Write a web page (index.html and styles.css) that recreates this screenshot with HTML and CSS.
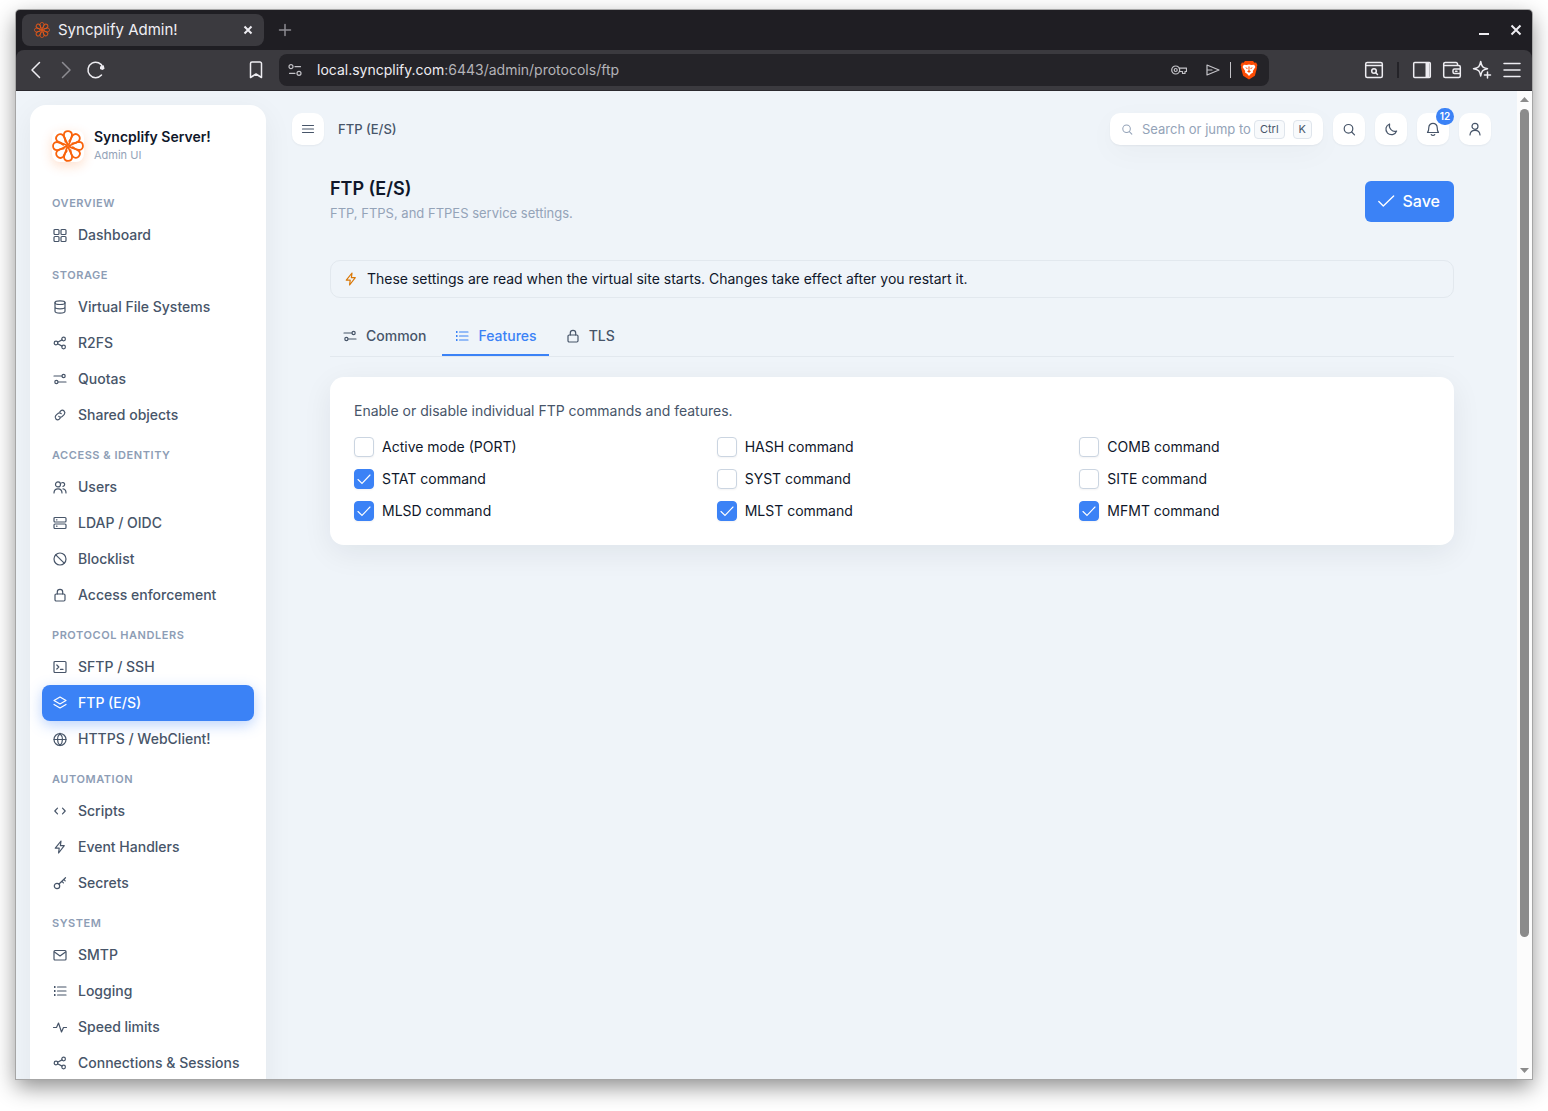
FILE: index.html
```html
<!DOCTYPE html>
<html lang="en">
<head>
    <meta charset="UTF-8">
    <meta name="viewport" content="width=device-width, initial-scale=1.0">
    <title>Syncplify Admin!</title>
    <link rel="stylesheet" href="styles.css">
</head>
<body>
    <!-- icon sprite -->
    <svg class="sprite" aria-hidden="true">
        <symbol id="i-logo" viewBox="0 0 32 32">
            <g id="petal"><path d="M15.6 14.8C15 11.500 12 8.600 11.900 5.200C11.900 -0.300 20 -0.300 20 5C20 7.600 18.700 9.600 17.200 11.200" /></g>
            <use href="#petal" transform="rotate(45 16 16)" />
            <use href="#petal" transform="rotate(90 16 16)" />
            <use href="#petal" transform="rotate(135 16 16)" />
            <use href="#petal" transform="rotate(180 16 16)" />
            <use href="#petal" transform="rotate(225 16 16)" />
            <use href="#petal" transform="rotate(270 16 16)" />
            <use href="#petal" transform="rotate(315 16 16)" />
        </symbol>
        <symbol id="i-grid" viewBox="0 0 16 16"><rect x="2" y="2.5" width="5" height="5" rx="1" /><rect x="9" y="2.5" width="5" height="5" rx="1" /><rect x="2" y="9.5" width="5" height="5" rx="1" /><rect x="9" y="9.5" width="5" height="5" rx="1" /></symbol>
        <symbol id="i-db" viewBox="0 0 16 16"><ellipse cx="8" cy="3.7" rx="5" ry="1.8" /><path d="M3 3.7v8.6c0 1 2.2 1.8 5 1.8s5-.8 5-1.800V3.7M3 8c0 1 2.2 1.8 5 1.8s5-.8 5-1.8" /></symbol>
        <symbol id="i-share" viewBox="0 0 16 16"><circle cx="4" cy="8" r="1.8" /><circle cx="11.6" cy="4" r="1.8" /><circle cx="11.6" cy="12" r="1.8" /><path d="M5.6 7.2L10 4.9M5.6 8.8l4.400 2.300" /></symbol>
        <symbol id="i-sliders" viewBox="0 0 16 16"><path d="M2 5h8M6 11h8" /><circle cx="11.6" cy="5" r="1.6" /><circle cx="4.4" cy="11" r="1.6" /></symbol>
        <symbol id="i-link" viewBox="0 0 16 16"><path d="M6.8 9.3a2.4 2.4 0 0 0 3.5 0l2-2a2.500 2.500 0 0 0-3.500-3.500l-1 1M9.200 6.700a2.400 2.400 0 0 0-3.500 0l-2 2a2.500 2.500 0 0 0 3.500 3.500l1-1" /></symbol>
        <symbol id="i-users" viewBox="0 0 16 16"><circle cx="6" cy="5.4" r="2.5" /><path d="M2 14c0-2.600 1.700-4.200 4-4.200s4 1.600 4 4.200M9.600 3.900a1.900 1.900 0 1 1 1.400 3.400M11 9.800c1.900.2 3 1.800 3 4.200" /></symbol>
        <symbol id="i-server" viewBox="0 0 16 16"><rect x="2" y="2.5" width="12" height="4.5" rx="1" /><rect x="2" y="9" width="12" height="4.5" rx="1" /><path d="M4.500 4.800h.5M4.500 11.200h.5" /></symbol>
        <symbol id="i-ban" viewBox="0 0 16 16"><circle cx="8" cy="8" r="6" /><path d="M3.800 3.800l8.400 8.400" /></symbol>
        <symbol id="i-lock" viewBox="0 0 16 16"><rect x="3" y="7" width="10" height="7" rx="1.2" /><path d="M5.300 7V5a2.700 2.700 0 0 1 5.400 0v2" /></symbol>
        <symbol id="i-terminal" viewBox="0 0 16 16"><rect x="2" y="2.5" width="12" height="11" rx="1" /><path d="M4.800 6l2 2-2 2M8.500 10.400h2.500" /></symbol>
        <symbol id="i-layers" viewBox="0 0 16 16"><path d="M8 2L14 5.500L8 9L2 5.500ZM2 9.500L8 13L14 9.500" /></symbol>
        <symbol id="i-globe" viewBox="0 0 16 16"><circle cx="8" cy="8.5" r="6" /><path d="M2 8.500h12M8 2.500c-3.300 3.200-3.300 8.800 0 12c3.300-3.200 3.300-8.800 0-12" /></symbol>
        <symbol id="i-code" viewBox="0 0 16 16"><path d="M5.500 5.200L2.800 8l2.700 2.800M10.500 5.200L13.200 8l-2.700 2.800" /></symbol>
        <symbol id="i-bolt" viewBox="0 0 16 16"><path d="M9 2L3.300 9.200h3.900L6.600 14l5.700-7.300H8.400Z" /></symbol>
        <symbol id="i-key" viewBox="0 0 16 16"><circle cx="5" cy="11" r="2.7" /><path d="M7 9l6.500-6.300M9.800 6.200l1.600 1.600M11.800 4.400l1.400 1.400" /></symbol>
        <symbol id="i-mail" viewBox="0 0 16 16"><rect x="2" y="3.5" width="12" height="9.5" rx="1" /><path d="M2.500 5L8 9l5.500-4" /></symbol>
        <symbol id="i-list" viewBox="0 0 16 16"><path d="M5.500 4H14M5.500 8H14M5.500 12H14" /><path class="dots" d="M2 4h1.500M2 8h1.500M2 12h1.500" /></symbol>
        <symbol id="i-pulse" viewBox="0 0 16 16"><path d="M1.500 8.500h3l2-4.500 3 9 2-4.500h3" /></symbol>
        <symbol id="i-menu" viewBox="0 0 16 16"><path d="M2.500 4.500h11M2.500 8h11M2.500 11.500h11" /></symbol>
        <symbol id="i-search" viewBox="0 0 16 16"><circle cx="7.5" cy="7.8" r="4.3" /><path d="M10.700 11l2.800 2.800" /></symbol>
        <symbol id="i-moon" viewBox="0 0 16 16"><path d="M6.600 3A5.500 5.500 0 1 0 13.600 10A5.600 5.600 0 0 1 6.600 3Z" /></symbol>
        <symbol id="i-bell" viewBox="0 0 16 16"><path d="M2.500 11.500h11c-1.300-1.300-1.300-2.600-1.300-5a4.200 4.200 0 0 0-8.400 0c0 2.400 0 3.700-1.300 5ZM6.300 13.600c.7 1.100 2.700 1.100 3.400 0" /></symbol>
        <symbol id="i-user" viewBox="0 0 16 16"><circle cx="8" cy="5.3" r="3" /><path d="M3 14c.2-3 2-4.600 5-4.600s4.800 1.600 5 4.600" /></symbol>
        <symbol id="i-check" viewBox="0 0 20 20"><path d="M2 10.500l5 5L18.500 4.500" /></symbol>
        <symbol id="i-brave" viewBox="0 0 18 20">
            <path fill="#fb4b04" d="M5 1h8l1.500 1.700 1.600-.2L17.400 5l-.6 1.800.2 1-2.100 8L9 19.600 3.100 15.800 1 7.800l.2-1L.6 5l1.300-2.500 1.600.2Z" />
            <path fill="#fff" d="M3.800 4.700l3 .4L9 4.400l2.200.7 3-.4 1.200 2.400-2.600 4 .2 1.500-2 1.200L9 16l-2-2.200-2-1.200.2-1.500-2.600-4Z" />
            <path fill="#fb4b04" d="M5 7.300l2.600.7-.4 1.300ZM13 7.300l-2.600.7.4 1.300ZM8.400 6.500h1.200L9.400 10.200l1.500 1.200L9 12.700l-1.900-1.300 1.500-1.200Z" />
        </symbol>
    </svg>

    <div class="window">
        <div class="tabstrip">
            <div class="browser-tab">
                <svg class="favicon"><use href="#i-logo" /></svg>
                <span class="browser-tab-title">Syncplify Admin!</span>
                <button class="chrome-btn small" aria-label="Close tab"><svg viewBox="0 0 16 16" class="bold"><path d="M4.500 4.500l7 7M11.500 4.500l-7 7" /></svg></button>
            </div>
            <button class="chrome-btn new-tab" aria-label="New tab"><svg viewBox="0 0 16 16"><path d="M8 2.500v11M2.500 8h11" /></svg></button>
            <div class="window-controls">
                <button class="chrome-btn" aria-label="Minimize"><svg viewBox="0 0 16 16" class="bold"><path d="M3 12h10" /></svg></button>
                <button class="chrome-btn" aria-label="Close"><svg viewBox="0 0 16 16" class="bold"><path d="M3.500 3.500l9 9M12.500 3.500l-9 9" /></svg></button>
            </div>
        </div>

        <div class="toolbar">
            <button class="chrome-btn" aria-label="Back"><svg viewBox="0 0 20 20"><path d="M13.500 2.500L6 10l7.500 7.500" /></svg></button>
            <button class="chrome-btn dim" aria-label="Forward"><svg viewBox="0 0 20 20"><path d="M6.500 2.500L14 10l-7.500 7.500" /></svg></button>
            <button class="chrome-btn" aria-label="Reload"><svg viewBox="0 0 20 20"><path d="M15.500 15A7.700 7.700 0 1 1 17 7.500" /><path class="solid" d="M14 6.500L17.800 5.200L18.500 8.800L16.500 10L14 9Z" /></svg></button>
            <button class="chrome-btn bookmark" aria-label="Bookmark"><svg viewBox="0 0 20 20"><path d="M4.500 3.500a1.500 1.500 0 0 1 1.500-1.500h8a1.500 1.500 0 0 1 1.500 1.500V17.500L10 14l-5.500 3.500Z" /></svg></button>
            <div class="url-bar">
                <svg class="url-icon" viewBox="0 0 16 16"><circle cx="4" cy="4.7" r="2" /><circle cx="12" cy="11.3" r="2" /><path d="M8 4.700h5.500M2.500 11.300H8" /></svg>
                <span class="url">local.syncplify.com<span class="url-path">:6443/admin/protocols/ftp</span></span>
                <svg class="url-icon" viewBox="0 0 16 16"><circle cx="4.7" cy="8" r="4" /><circle cx="4.7" cy="8" r="1.5" /><path d="M8.300 6.200h7.200v3.300h-1.500v2h-2.500v-2H8.300" /></svg>
                <div class="url-actions">
                    <svg class="url-icon" viewBox="0 0 16 16"><path d="M2 3L14 8L2 13ZM2 8h5" /></svg>
                    <span class="url-sep"></span>
                    <svg class="brave" aria-label="Shields"><use href="#i-brave" /></svg>
                </div>
            </div>
            <button class="chrome-btn" aria-label="Search tabs"><svg viewBox="0 0 20 20"><rect x="1.7" y="2.5" width="16.6" height="15" rx="1.5" /><path d="M2 5.500h16M11.500 12.500l2 2" /><circle cx="10" cy="11" r="2.3" /></svg></button>
            <span class="toolbar-sep"></span>
            <button class="chrome-btn" aria-label="Sidebar"><svg viewBox="0 0 20 20"><rect x="1.7" y="2.5" width="16.6" height="15" rx="1" /><path class="solid" d="M13.500 2.500h4v15h-4Z" /></svg></button>
            <button class="chrome-btn" aria-label="Wallet"><svg viewBox="0 0 20 20"><path d="M15.500 5.500V4A1.500 1.500 0 0 0 14 2.500H3.300A1.500 1.500 0 0 0 1.700 4v12a1.500 1.500 0 0 0 1.500 1.500h13.600a1.500 1.500 0 0 0 1.500-1.500V7a1.500 1.500 0 0 0-1.500-1.500H2M18 9h-5.500a1.500 1.500 0 0 0-1.500 1.500v1.500a1.500 1.500 0 0 0 1.500 1.500H18M13.500 11.300h1.500" /></svg></button>
            <button class="chrome-btn" aria-label="Assistant"><svg viewBox="0 0 20 20"><path d="M8.700 1.500c.9 5.200 2 6.300 6.800 7.200-4.800.9-5.900 2-6.800 7.200-.9-5.200-2-6.300-7.200-7.200 5.200-.9 6.300-2 7.200-7.200ZM15.500 12v6M12.500 15h6" /></svg></button>
            <button class="chrome-btn" aria-label="Browser menu"><svg viewBox="0 0 20 20"><path d="M2 3.500h16M2 10h16M2 16.500h16" /></svg></button>
        </div>

        <div class="viewport">
            <aside class="sidebar">
                <div class="brand">
                    <svg class="brand-logo"><use href="#i-logo" /></svg>
                    <div>
                        <div class="brand-name">Syncplify Server!</div>
                        <div class="brand-sub">Admin UI</div>
                    </div>
                </div>
                <nav>
                    <h2 class="nav-heading">Overview</h2>
                    <a class="nav-item" href="#"><svg><use href="#i-grid" /></svg>Dashboard</a>

                    <h2 class="nav-heading">Storage</h2>
                    <a class="nav-item" href="#"><svg><use href="#i-db" /></svg>Virtual File Systems</a>
                    <a class="nav-item" href="#"><svg><use href="#i-share" /></svg>R2FS</a>
                    <a class="nav-item" href="#"><svg><use href="#i-sliders" /></svg>Quotas</a>
                    <a class="nav-item" href="#"><svg><use href="#i-link" /></svg>Shared objects</a>

                    <h2 class="nav-heading">Access &amp; Identity</h2>
                    <a class="nav-item" href="#"><svg><use href="#i-users" /></svg>Users</a>
                    <a class="nav-item" href="#"><svg><use href="#i-server" /></svg>LDAP / OIDC</a>
                    <a class="nav-item" href="#"><svg><use href="#i-ban" /></svg>Blocklist</a>
                    <a class="nav-item" href="#"><svg><use href="#i-lock" /></svg>Access enforcement</a>

                    <h2 class="nav-heading">Protocol Handlers</h2>
                    <a class="nav-item" href="#"><svg><use href="#i-terminal" /></svg>SFTP / SSH</a>
                    <a class="nav-item active" href="#" aria-current="page"><svg><use href="#i-layers" /></svg>FTP (E/S)</a>
                    <a class="nav-item" href="#"><svg><use href="#i-globe" /></svg>HTTPS / WebClient!</a>

                    <h2 class="nav-heading">Automation</h2>
                    <a class="nav-item" href="#"><svg><use href="#i-code" /></svg>Scripts</a>
                    <a class="nav-item" href="#"><svg><use href="#i-bolt" /></svg>Event Handlers</a>
                    <a class="nav-item" href="#"><svg><use href="#i-key" /></svg>Secrets</a>

                    <h2 class="nav-heading">System</h2>
                    <a class="nav-item" href="#"><svg><use href="#i-mail" /></svg>SMTP</a>
                    <a class="nav-item" href="#"><svg><use href="#i-list" /></svg>Logging</a>
                    <a class="nav-item" href="#"><svg><use href="#i-pulse" /></svg>Speed limits</a>
                    <a class="nav-item" href="#"><svg><use href="#i-share" /></svg>Connections &amp; Sessions</a>
                </nav>
            </aside>

            <main class="main">
                <header class="topbar">
                    <button class="icon-btn" aria-label="Toggle menu"><svg><use href="#i-menu" /></svg></button>
                    <span class="crumb">FTP (E/S)</span>
                    <div class="search">
                        <svg><use href="#i-search" /></svg>
                        <input type="text" placeholder="Search or jump to" aria-label="Search or jump to">
                        <kbd>Ctrl</kbd>
                        <kbd>K</kbd>
                    </div>
                    <button class="icon-btn" aria-label="Search"><svg><use href="#i-search" /></svg></button>
                    <button class="icon-btn" aria-label="Dark mode"><svg><use href="#i-moon" /></svg></button>
                    <button class="icon-btn" aria-label="Notifications"><svg><use href="#i-bell" /></svg><span class="badge">12</span></button>
                    <button class="icon-btn" aria-label="Account"><svg><use href="#i-user" /></svg></button>
                </header>

                <section class="content">
                    <div class="page-head">
                        <div>
                            <h1>FTP (E/S)</h1>
                            <p>FTP, FTPS, and FTPES service settings.</p>
                        </div>
                        <button class="save-btn"><svg><use href="#i-check" /></svg>Save</button>
                    </div>

                    <div class="notice">
                        <svg><use href="#i-bolt" /></svg>
                        <span>These settings are read when the virtual site starts. Changes take effect after you restart it.</span>
                    </div>

                    <div class="tabs" role="tablist">
                        <button class="tab" role="tab"><svg><use href="#i-sliders" /></svg>Common</button>
                        <button class="tab active" role="tab" aria-selected="true"><svg><use href="#i-list" /></svg>Features</button>
                        <button class="tab" role="tab"><svg><use href="#i-lock" /></svg>TLS</button>
                    </div>

                    <div class="card">
                        <p>Enable or disable individual FTP commands and features.</p>
                        <div class="features">
                            <label><input type="checkbox">Active mode (PORT)</label>
                            <label><input type="checkbox">HASH command</label>
                            <label><input type="checkbox">COMB command</label>
                            <label><input type="checkbox" checked>STAT command</label>
                            <label><input type="checkbox">SYST command</label>
                            <label><input type="checkbox">SITE command</label>
                            <label><input type="checkbox" checked>MLSD command</label>
                            <label><input type="checkbox" checked>MLST command</label>
                            <label><input type="checkbox" checked>MFMT command</label>
                        </div>
                    </div>
                </section>
            </main>

            <div class="scrollbar">
                <svg viewBox="0 0 9 5"><path d="M0 5L4.500 0L9 5Z" /></svg>
                <div class="track"><div class="thumb"></div></div>
                <svg viewBox="0 0 9 5"><path d="M0 0L4.500 5L9 0Z" /></svg>
            </div>
        </div>
    </div>
</body>
</html>
```
FILE: styles.css
```css
* {
    box-sizing: border-box;
}

body {
    margin: 0;
    height: 100vh;
    padding: 10px 16px 32px;
    background: #fff;
    font-family: Inter, "Liberation Sans", sans-serif;
    font-size: 14px;
    line-height: 20px;
    color: #0f172a;
    overflow: hidden;
}

h1, h2, p {
    margin: 0;
}

button, input {
    font: inherit;
    color: inherit;
    border: 0;
    background: none;
    padding: 0;
}

svg {
    width: 16px;
    height: 16px;
    flex: none;
    fill: none;
    stroke: currentColor;
    stroke-width: 1.2;
    stroke-linecap: round;
    stroke-linejoin: round;
}

.sprite {
    display: none;
}

.dots {
    stroke-width: 2;
    stroke-linecap: butt;
}

/* browser window */
.window {
    display: flex;
    flex-direction: column;
    height: 100%;
    border-radius: 4px 4px 0 0;
    background: #1f1e23;
    box-shadow: 0 0 0 1px #a6a6a6, 0 8px 22px rgba(0, 0, 0, 0.45);
}

.tabstrip {
    display: flex;
    align-items: center;
    height: 40px;
    padding: 0 1px 0 6px;
    color: #f0eff4;
}

.browser-tab {
    display: flex;
    align-items: center;
    gap: 8px;
    width: 242px;
    height: 32px;
    padding: 0 4px 0 12px;
    border-radius: 8px;
    background: #3b3a3f;
}

.favicon {
    color: #e0571a;
    stroke-width: 2;
}

.browser-tab-title {
    flex: 1;
    font-size: 15px;
}

.chrome-btn {
    display: flex;
    align-items: center;
    justify-content: center;
    flex: none;
    width: 30px;
    height: 30px;
    color: #eeedf2;
}

.chrome-btn svg {
    width: 20px;
    height: 20px;
    stroke-width: 1.5;
}

.chrome-btn.small {
    width: 24px;
}

.chrome-btn.small svg,
.tabstrip .chrome-btn svg {
    width: 16px;
    height: 16px;
}

.chrome-btn .bold {
    stroke-width: 2;
    stroke-linecap: butt;
}

.chrome-btn .solid {
    fill: currentColor;
    stroke: none;
}

.chrome-btn.dim,
.new-tab {
    color: #8d8c92;
}

.new-tab {
    margin-left: 6px;
}

.window-controls {
    display: flex;
    gap: 2px;
    margin-left: auto;
}

.toolbar {
    display: flex;
    align-items: center;
    height: 41px;
    padding: 0 5px;
    border-bottom: 1px solid #2a292e;
    border-radius: 8px 8px 0 0;
    background: #3b3a3f;
}

.bookmark {
    margin-left: auto;
}

.url-bar {
    display: flex;
    align-items: center;
    gap: 18px;
    flex: 0 1 990px;
    height: 32px;
    margin: 0 90px 0 8px;
    padding: 0 11px 0 8px;
    border-radius: 8px;
    background: #242328;
    color: #c4c3c8;
}

.url {
    flex: 1;
    margin-left: -4px;
    font-size: 14px;
    color: #eeedf2;
}

.url-path {
    color: #b4b3b8;
}

.url-actions {
    display: flex;
    align-items: center;
    gap: 9px;
}

.url-sep {
    width: 1px;
    height: 16px;
    background: #c4c3c8;
}

.brave {
    width: 18px;
    height: 20px;
    stroke: none;
}

.toolbar-sep {
    width: 2px;
    height: 16px;
    margin: 0 8px;
    background: #242328;
}

/* page */
.viewport {
    display: flex;
    flex: 1;
    min-height: 0;
    padding-left: 14px;
    background: #eff4f9;
    overflow: hidden;
}

.sidebar {
    flex: none;
    align-self: flex-start;
    width: 236px;
    margin-top: 14px;
    padding: 22px 12px 24px;
    border-radius: 16px;
    background: #fff;
    box-shadow: 0 8px 30px rgba(15, 23, 42, 0.06);
}

.brand {
    display: flex;
    align-items: center;
    gap: 10px;
    height: 36px;
    margin-bottom: 18px;
    padding: 0 10px;
}

.brand-logo {
    width: 32px;
    height: 32px;
    margin-top: 2px;
    border-radius: 8px;
    color: #f9630c;
    stroke-width: 1.8;
    box-shadow: 0 4px 12px rgba(249, 99, 12, 0.2);
}

.brand-name {
    font-size: 14px;
    font-weight: 600;
}

.brand-sub {
    font-size: 11px;
    line-height: 16px;
    color: #94a3b8;
}

.nav-heading {
    padding: 14px 10px 6px;
    font-size: 11px;
    line-height: 16px;
    font-weight: 600;
    letter-spacing: 0.05em;
    text-transform: uppercase;
    color: #8d9db5;
}

.nav-item {
    display: flex;
    align-items: center;
    gap: 10px;
    height: 36px;
    padding: 0 10px;
    border-radius: 8px;
    font-weight: 500;
    color: #475569;
    text-decoration: none;
    white-space: nowrap;
}

.nav-item.active {
    background: #3b82f6;
    color: #fff;
    box-shadow: 0 4px 14px rgba(59, 130, 246, 0.35);
}

.main {
    flex: 1;
    min-width: 0;
    padding: 22px 26px;
}

.topbar {
    display: flex;
    align-items: center;
    gap: 10px;
}

.icon-btn {
    position: relative;
    display: flex;
    align-items: center;
    justify-content: center;
    width: 32px;
    height: 32px;
    border-radius: 10px;
    background: #fff;
    color: #475569;
    box-shadow: 0 1px 2px rgba(15, 23, 42, 0.05);
}

.badge {
    position: absolute;
    top: -5px;
    right: -5px;
    min-width: 18px;
    height: 17px;
    border-radius: 9px;
    background: #3b82f6;
    color: #fff;
    font-size: 10px;
    line-height: 17px;
    font-weight: 600;
}

.crumb {
    flex: 1;
    padding-left: 4px;
    font-size: 13px;
    font-weight: 500;
    color: #475569;
}

.search {
    display: flex;
    align-items: center;
    gap: 8px;
    width: 213px;
    height: 32px;
    padding: 0 11px 0 10px;
    border-radius: 10px;
    background: #fff;
    color: #94a3b8;
    box-shadow: 0 1px 2px rgba(15, 23, 42, 0.05), 0 8px 30px rgba(15, 23, 42, 0.03);
}

.search svg {
    width: 14px;
    height: 14px;
}

.search input {
    flex: 1;
    min-width: 0;
    margin-right: -6px;
    font-size: 13px;
}

.search input::placeholder {
    color: #94a3b8;
    opacity: 1;
}

kbd {
    padding: 0 5px;
    border: 1px solid #dfe5ec;
    border-radius: 4px;
    background: #f8fafc;
    font-family: inherit;
    font-size: 11px;
    line-height: 17px;
    color: #475569;
}

.content {
    padding: 32px 37px 0 38px;
}

.page-head {
    display: flex;
    justify-content: space-between;
    align-items: center;
}

h1 {
    font-size: 18px;
    line-height: 24px;
    font-weight: 600;
}

.page-head p {
    font-size: 13px;
    line-height: 24px;
    color: #94a3b8;
}

.save-btn {
    display: flex;
    align-items: center;
    gap: 8px;
    height: 41px;
    padding: 0 14px 0 12px;
    border-radius: 6px;
    background: #3b82f6;
    color: #fff;
    font-size: 16px;
    font-weight: 500;
}

.save-btn svg {
    width: 18px;
    height: 18px;
    stroke-width: 1.5;
}

.notice {
    display: flex;
    align-items: center;
    gap: 8px;
    height: 38px;
    margin-top: 35px;
    padding: 0 12px;
    border: 1px solid #e2e8ee;
    border-radius: 10px;
}

.notice svg {
    color: #d97706;
}

.tabs {
    display: flex;
    gap: 4px;
    margin-top: 18px;
    border-bottom: 1px solid #e2e8ee;
}

.tab {
    display: flex;
    align-items: center;
    gap: 8px;
    height: 40px;
    padding: 2px 12px 0;
    border-bottom: 2px solid transparent;
    font-weight: 500;
    color: #475569;
}

.tab.active {
    border-bottom-color: #3b82f6;
    color: #3b82f6;
}

.card {
    margin-top: 20px;
    padding: 24px;
    border-radius: 14px;
    background: #fff;
    box-shadow: 0 8px 30px rgba(15, 23, 42, 0.07);
}

.card p {
    color: #475569;
}

.features {
    display: grid;
    grid-template-columns: repeat(3, 1fr);
    gap: 12px;
    margin-top: 16px;
}

.features label {
    display: flex;
    align-items: center;
    gap: 8px;
}

.features input {
    appearance: none;
    width: 20px;
    height: 20px;
    margin: 0;
    border: 1px solid #cbd5e1;
    border-radius: 4px;
    background: #fff;
    box-shadow: 0 1px 2px rgba(15, 23, 42, 0.05);
}

.features input:checked {
    border-color: #3b82f6;
    background: #3b82f6 url("data:image/svg+xml,%3Csvg xmlns='http://www.w3.org/2000/svg' viewBox='0 0 18 18' fill='none' stroke='white' stroke-width='1.1' stroke-linecap='round'%3E%3Cpath d='M3 9.500l4 4L15 5'/%3E%3C/svg%3E") center / 18px no-repeat;
}

/* page scrollbar */
.scrollbar {
    display: flex;
    flex-direction: column;
    align-items: center;
    gap: 7px;
    flex: none;
    width: 15px;
    padding: 6px 0;
    background: #fcfcfc;
}

.scrollbar svg {
    width: 9px;
    height: 5px;
    fill: #8b8b8b;
    stroke: none;
}

.track {
    flex: 1;
    width: 9px;
}

.thumb {
    height: 87%;
    border-radius: 5px;
    background: #8b8b8b;
}
```
